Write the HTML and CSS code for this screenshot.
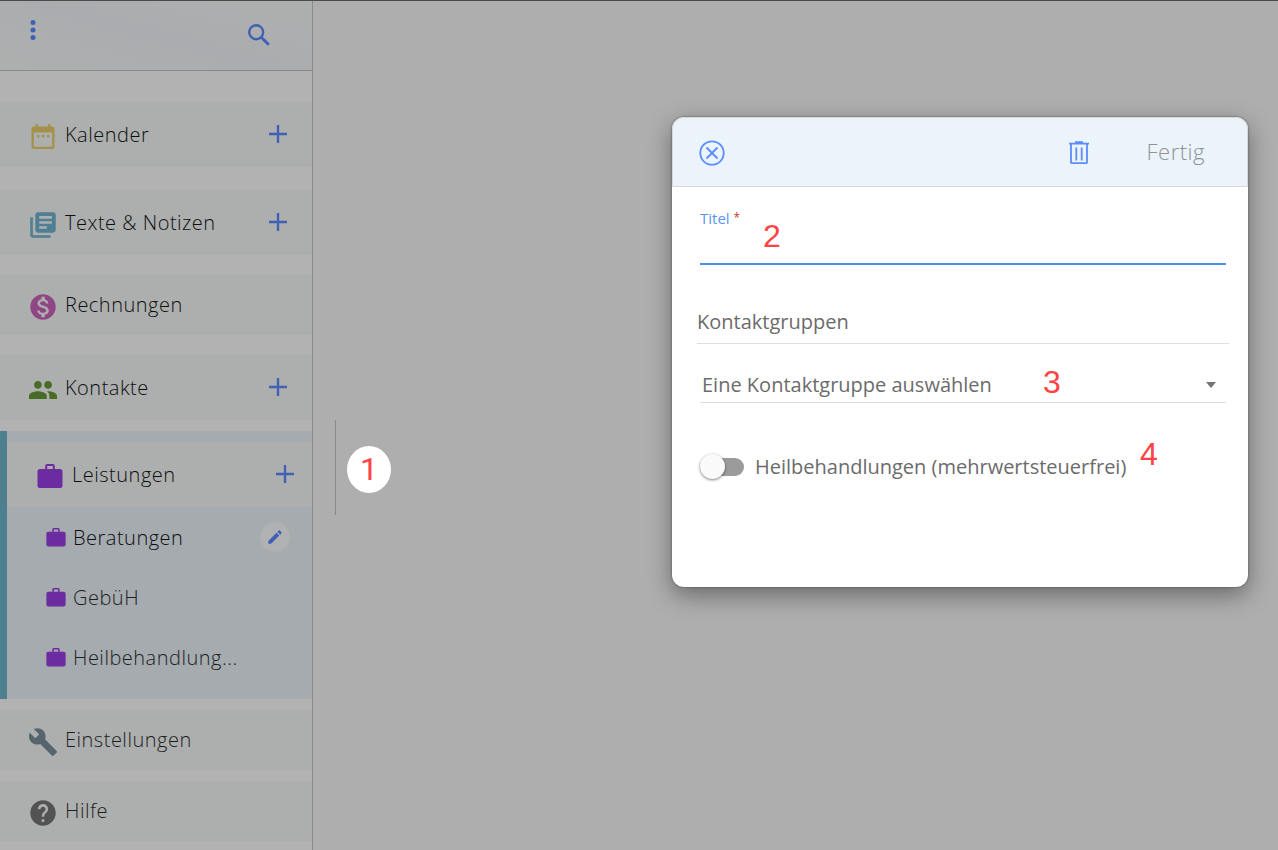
FILE: index.html
```html
<!DOCTYPE html>
<html lang="de">
<head>
<meta charset="utf-8">
<title>Leistungen</title>
<link rel="stylesheet" href="styles.css">
</head>
<body>
<svg class="sprite" aria-hidden="true">
  <symbol id="plus" viewBox="0 0 18 18"><path d="M9 0v18M0 9h18" fill="none" stroke="currentColor" stroke-width="2.400"/></symbol>
  <symbol id="case" viewBox="0 0 26 26"><path d="M10.200 0h5.600a2 2 0 0 1 2 2v3H23a2.500 2.500 0 0 1 2.500 2.500v14A2.500 2.500 0 0 1 23 24H3a2.500 2.500 0 0 1-2.500-2.500v-14A2.500 2.500 0 0 1 3 5h5.200V2a2 2 0 0 1 2-2zM10.200 2v3h5.600V2z" fill="currentColor" fill-rule="evenodd"/></symbol>
</svg>
<div class="app">
  <aside class="sidebar">
    <header class="topbar">
      <button class="icon-btn" aria-label="Menü"><svg width="6" height="20" viewBox="0 0 6 20" fill="currentColor"><circle cx="3" cy="2.500" r="2.500"/><circle cx="3" cy="10" r="2.500"/><circle cx="3" cy="17.500" r="2.500"/></svg></button>
      <button class="icon-btn search" aria-label="Suchen"><svg width="22" height="22" viewBox="0 0 22 22" fill="none" stroke="currentColor"><circle cx="8.200" cy="8.200" r="7" stroke-width="2.400"/><path d="M13.500 13.500l7.300 7.300" stroke-width="2.900"/></svg></button>
    </header>
    <nav class="nav">
      <div class="item tall first">
        <a href="#" class="link"><svg class="ico yellow" viewBox="0 0 28 28" fill="currentColor"><path fill-rule="evenodd" d="M6.500 1h2.300v2.500h10.400V1h2.300v2.500H23a2.500 2.500 0 0 1 2.500 2.500v17.500A2.500 2.500 0 0 1 23 26H5a2.500 2.500 0 0 1-2.500-2.500V6A2.500 2.500 0 0 1 5 3.500h1.500zM4.800 9.500v13.200a1 1 0 0 0 1 1h16.400a1 1 0 0 0 1-1V9.500z"/><path d="M8 12h2.400v2.400H8zM13 12h2.400v2.400H13zM18 12h2.400v2.400H18z"/></svg><span>Kalender</span></a>
        <button class="icon-btn add" aria-label="Kalender hinzufügen"><svg width="18" height="18"><use href="#plus"/></svg></button>
      </div>
      <div class="item tall">
        <a href="#" class="link"><svg class="ico teal" viewBox="1 1 22 22" fill="currentColor"><path d="M4 6H2v14c0 1.100.9 2 2 2h14v-2H4V6zm16-4H8c-1.100 0-2 .9-2 2v12c0 1.100.9 2 2 2h12c1.100 0 2-.9 2-2V4c0-1.100-.9-2-2-2zm-1 9H9V9h10v2zm-4 4H9v-2h6v2zm4-8H9V5h10v2z"/></svg><span>Texte &amp; Notizen</span></a>
        <button class="icon-btn add" aria-label="Text hinzufügen"><svg width="18" height="18"><use href="#plus"/></svg></button>
      </div>
      <div class="item">
        <a href="#" class="link"><svg class="ico pink" viewBox="1 1 22 22" fill="currentColor"><path d="M12 2C6.480 2 2 6.480 2 12s4.480 10 10 10 10-4.480 10-10S17.520 2 12 2zm1.410 16.090V20h-2.670v-1.930c-1.710-.36-3.160-1.460-3.270-3.400h1.960c.1 1.050.82 1.870 2.650 1.870 1.960 0 2.400-.98 2.400-1.590 0-.83-.44-1.610-2.670-2.140-2.480-.6-4.180-1.620-4.180-3.670 0-1.720 1.390-2.840 3.110-3.210V4h2.670v1.950c1.860.45 2.790 1.860 2.850 3.390H14.300c-.05-1.110-.64-1.870-2.220-1.870-1.500 0-2.400.68-2.400 1.640 0 .84.65 1.390 2.670 1.910s4.180 1.390 4.180 3.910c-.01 1.830-1.380 2.830-3.120 3.160z"/></svg><span>Rechnungen</span></a>
      </div>
      <div class="item tall">
        <a href="#" class="link"><svg class="ico green" viewBox="1 1 22 22" fill="currentColor"><path d="M16 11c1.660 0 2.990-1.340 2.990-3S17.660 5 16 5s-3 1.340-3 3 1.340 3 3 3zm-8 0c1.660 0 2.990-1.340 2.990-3S9.660 5 8 5 5 6.340 5 8s1.340 3 3 3zm0 2c-2.330 0-7 1.170-7 3.500V19h14v-2.500c0-2.330-4.670-3.500-7-3.500zm8 0c-.29 0-.62.020-.97.050 1.160.84 1.970 1.970 1.970 3.450V19h6v-2.500c0-2.330-4.670-3.500-7-3.500z"/></svg><span>Kontakte</span></a>
        <button class="icon-btn add" aria-label="Kontakt hinzufügen"><svg width="18" height="18"><use href="#plus"/></svg></button>
      </div>
      <section class="group">
        <div class="item tall">
          <a href="#" class="link"><svg class="ico case" viewBox="-1 -1 28 28"><use href="#case" width="26" height="26"/></svg><span>Leistungen</span></a>
          <button class="icon-btn add" aria-label="Leistung hinzufügen"><svg width="18" height="18"><use href="#plus"/></svg></button>
        </div>
        <div class="sub">
          <a href="#" class="link"><svg class="small case" viewBox="0 0 26 26"><use href="#case" width="26" height="26"/></svg><span>Beratungen</span></a>
          <button class="edit" aria-label="Beratungen bearbeiten"><svg width="18" height="18" viewBox="0 0 24 24" fill="currentColor"><path d="M3 17.250V21h3.750L17.810 9.940l-3.750-3.750L3 17.250zM20.710 7.040c.39-.39.39-1.020 0-1.410l-2.340-2.340a1 1 0 0 0-1.410 0l-1.830 1.830 3.750 3.750 1.830-1.830z"/></svg></button>
        </div>
        <div class="sub"><a href="#" class="link soft"><svg class="small case" viewBox="0 0 26 26"><use href="#case" width="26" height="26"/></svg><span>GebüH</span></a></div>
        <div class="sub"><a href="#" class="link soft"><svg class="small case" viewBox="0 0 26 26"><use href="#case" width="26" height="26"/></svg><span>Heilbehandlung...</span></a></div>
      </section>
      <div class="item close">
        <a href="#" class="link soft"><svg class="ico slate" viewBox="1 1 22 22" fill="currentColor"><path d="M22.700 19l-9.100-9.100c.9-2.300.4-5-1.500-6.900-2-2-5-2.400-7.400-1.300L9 6 6 9 1.600 4.700C.4 7.100.9 10.100 2.900 12.100c1.900 1.900 4.600 2.400 6.900 1.500l9.100 9.100c.4.400 1 .4 1.400 0l2.300-2.300c.5-.4.500-1.100.1-1.400z"/></svg><span>Einstellungen</span></a>
      </div>
      <div class="item close">
        <a href="#" class="link soft"><svg class="ico gray" viewBox="1 1 22 22" fill="currentColor"><path d="M12 2C6.480 2 2 6.480 2 12s4.480 10 10 10 10-4.480 10-10S17.520 2 12 2zm1 17h-2v-2h2v2zm2.070-7.750l-.9.920C13.450 12.900 13 13.500 13 15h-2v-.5c0-1.100.45-2.100 1.170-2.830l1.240-1.260c.37-.36.590-.86.590-1.410 0-1.100-.9-2-2-2s-2 .9-2 2H8c0-2.210 1.790-4 4-4s4 1.790 4 4c0 .88-.36 1.680-.93 2.250z"/></svg><span>Hilfe</span></a>
      </div>
    </nav>
  </aside>
  <main class="stage">
    <div class="marker"><span class="badge">1</span></div>
    <form class="dialog" role="dialog" aria-label="Leistung">
      <header class="dialog-head">
        <button type="button" class="icon-btn bright" aria-label="Schließen"><svg width="26" height="26" viewBox="0 0 26 26" fill="none" stroke="currentColor" stroke-width="1.800"><circle cx="13" cy="13" r="11.700"/><path d="M7.500 7.500l11 11M18.500 7.500l-11 11"/></svg></button>
        <button type="button" class="icon-btn bright trash" aria-label="Löschen"><svg width="20" height="24" viewBox="0 0 20 24" fill="none" stroke="currentColor" stroke-width="1.800"><path d="M0 2.700h20M6 1.200h8M2 3v18.200a1 1 0 0 0 1 1h14a1 1 0 0 0 1-1V3M7.300 6.500v13M12.700 6.500v13"/></svg></button>
        <button type="submit" class="done" disabled>Fertig</button>
      </header>
      <div class="dialog-body">
        <div class="field">
          <label for="titel">Titel <span class="req">*</span></label>
          <input id="titel" type="text" required>
        </div>
        <label class="heading" for="gruppe">Kontaktgruppen</label>
        <div class="select-wrap">
          <select id="gruppe"><option>Eine Kontaktgruppe auswählen</option></select>
        </div>
        <label class="toggle"><input type="checkbox"><span>Heilbehandlungen (mehrwertsteuerfrei)</span></label>
      </div>
      <span class="note n2">2</span>
      <span class="note n3">3</span>
      <span class="note n4">4</span>
    </form>
  </main>
</div>
</body>
</html>
```
FILE: styles.css
```css
* { box-sizing: border-box; }
body {
  margin: 0;
  background: #aeaeae;
  color: #0c0e0f;
  font: 20px/28px "Open Sans", sans-serif;
}
button { margin: 0; padding: 0; border: 0; background: none; font: inherit; }
svg { display: block; }
.sprite { position: absolute; width: 0; height: 0; }
.app { display: flex; min-height: 100vh; border-top: 1px solid #4b4b4c; }

.sidebar { flex: 0 0 313px; background: #b2b2b2; border-right: 1px solid #89898a; }
.topbar {
  display: flex;
  justify-content: space-between;
  align-items: flex-start;
  height: 70px;
  padding: 19px 42px 0 30px;
  background: linear-gradient(15deg, #adb0af, #abacaf 50%, #aeb0af);
  border-bottom: 1px solid #89898a;
}
.icon-btn { color: #4061b3; }
.search { padding-top: 4px; }
.add { padding-bottom: 1px; }

.nav { padding-top: 31px; }
.item {
  display: flex;
  align-items: center;
  justify-content: space-between;
  height: 60px;
  margin-top: 20px;
  padding: 0 25px 0 29px;
  background: #adafae;
}
.tall { height: 65px; }
.first { margin: 0 0 23px; }
.first + .item { margin-top: 0; }
.close { margin-top: 11px; }
.link {
  display: flex;
  align-items: center;
  gap: 8px;
  color: inherit;
  font-weight: 340;
  letter-spacing: 0.5px;
  text-decoration: none;
}
.soft { color: #1c1e1f; }
.ico { width: 28px; height: 28px; margin-top: 4px; }
.small { width: 20px; height: 20px; }
.yellow { color: #a3914a; }
.teal { color: #4e7f93; }
.pink { color: #8f4684; }
.green { color: #4a6b25; }
.case { color: #6c2ba0; }
.slate { color: #56646d; }
.gray { color: #535353; }

.group {
  margin-top: 11px;
  padding: 11px 0 12px;
  background: #a5abaf;
  border-left: 7px solid #4e7f8f;
}
.group .item { margin-top: 0; padding-right: 18px; }
.sub {
  display: flex;
  align-items: center;
  justify-content: space-between;
  height: 60px;
  padding: 1px 22px 0 39px;
}
.sub .link { gap: 7px; }
.edit {
  display: grid;
  place-items: center;
  width: 30px;
  height: 30px;
  margin-bottom: 2px;
  border-radius: 50%;
  background: #afb1b2;
  color: #4061b3;
}

.stage {
  flex: 1;
  display: flex;
  justify-content: space-between;
  align-items: flex-start;
  min-width: 0;
  padding: 116px 30px 0 22px;
}
.marker {
  display: flex;
  align-items: center;
  height: 95px;
  margin-top: 303px;
  padding: 4px 0 0 11px;
  border-left: 1px solid #89898a;
}
.badge {
  width: 44px;
  border-radius: 50%;
  background: #fff;
  color: #ff4245;
  font: 32px/47px Roboto, sans-serif;
  text-align: center;
}

.dialog {
  position: relative;
  flex: 0 1 576px;
  min-height: 470px;
  border-radius: 12px;
  background: #fff;
  color: #6b6b6b;
  box-shadow: 0 0 2px #444, 0 8px 24px rgba(0, 0, 0, 0.4);
}
.dialog-head {
  display: flex;
  align-items: center;
  height: 70px;
  padding: 2px 42px 0 26px;
  border: 1px solid #d5d9dc;
  border-radius: 12px 12px 0 0;
  background: #ecf4fb;
}
.bright { color: #5b8bff; }
.trash { margin-left: auto; }
.done {
  margin-left: 58px;
  padding-bottom: 4px;
  color: #8e9396;
  font-size: 22px;
  font-weight: 340;
  letter-spacing: 0.5px;
}
.dialog-body { display: flex; flex-direction: column; padding: 20px 19px 40px 25px; }
.field { display: flex; flex-direction: column; margin: 0 3px; }
.field label { height: 22px; color: #5794ee; font-size: 15px; line-height: 22px; }
.req { color: #c8402f; font-size: 12px; vertical-align: 2px; }
.field input {
  height: 36px;
  padding: 0;
  border: 0;
  border-bottom: 2px solid #4f8fe6;
  outline: 0;
  background: none;
  font: inherit;
}
.heading { margin-top: 43px; padding: 0 0 7px; border-bottom: 1px solid #dedede; }
.select-wrap { display: flex; position: relative; margin: 24px 3px 0; border-bottom: 1px solid #dedede; }
.select-wrap::after {
  content: "";
  position: absolute;
  right: 10px;
  top: 14px;
  border: 5px solid transparent;
  border-top: 6px solid #757575;
  border-bottom: 0;
}
.select-wrap select {
  flex: 1;
  height: 34px;
  padding: 0 30px 0 2px;
  border: 0;
  appearance: none;
  background: none;
  color: inherit;
  font: inherit;
}
.toggle { display: flex; align-items: center; gap: 11px; margin: 50px 3px 0; }
.toggle input {
  appearance: none;
  position: relative;
  width: 44px;
  height: 18px;
  margin: 0;
  border-radius: 9px;
  background: #9b9b9b;
}
.toggle input::before {
  content: "";
  position: absolute;
  left: 0;
  top: -4px;
  width: 25px;
  height: 25px;
  border-radius: 50%;
  background: #fafafa;
  box-shadow: 0 1px 3px rgba(0, 0, 0, 0.5);
}
.note { position: absolute; color: #ff4245; font: 32px/36px "Liberation Sans", Arial, sans-serif; }
.n2 { left: 91px; top: 101px; }
.n3 { left: 371px; top: 247px; }
.n4 { left: 468px; top: 319px; }
```
